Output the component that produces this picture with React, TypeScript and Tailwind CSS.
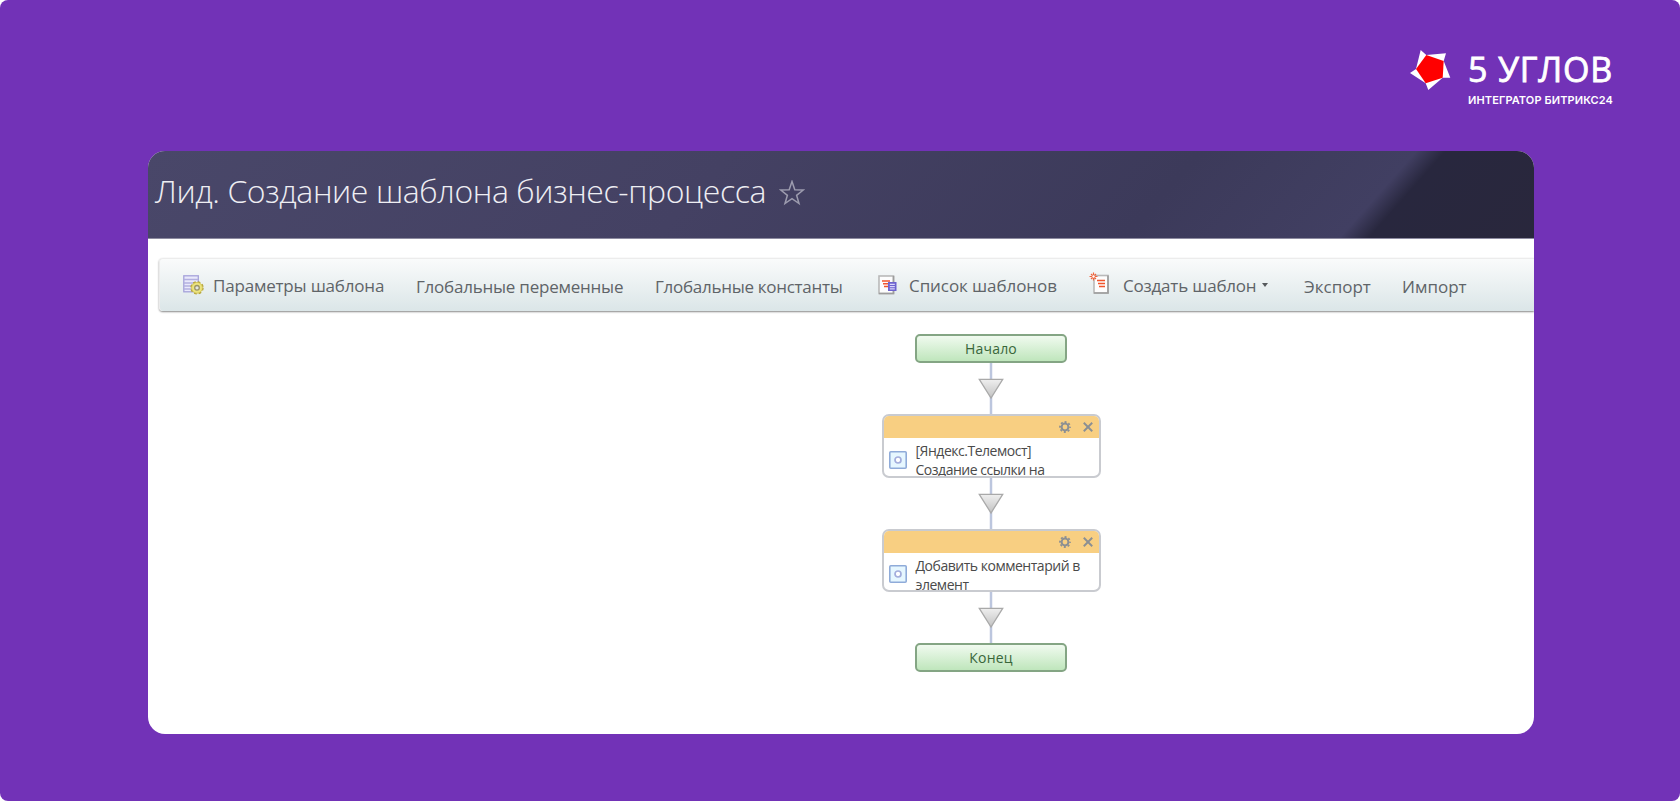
import React from 'react';

const sans = "font-['Open_Sans','Noto_Sans',sans-serif]";

function Logo() {
  return (
    <div className="flex gap-[14px]">
      <svg width="44" height="44" viewBox="0 0 44 44" className="shrink-0">
        <path d="M10.700 1 16.300 6 36 4.300 33.700 12 40.300 28.700 32.700 28.700 18.300 41 15.700 34.300 0 24 6 20Z" fill="#fff" />
        <path d="M16.300 6 33.700 12 32.700 28.700 15.700 34.300 6 20Z" fill="#f00" />
      </svg>
      <div className="text-white whitespace-nowrap">
        <div className={`${sans} text-[34px] leading-[40px] tracking-[0.8px] [-webkit-text-stroke:0.8px_white]`}>5 УГЛОВ</div>
        <div className="font-[Inter,sans-serif] mt-1 text-[11px] leading-[14px] font-semibold tracking-[0.1px]">ИНТЕГРАТОР БИТРИКС24</div>
      </div>
    </div>
  );
}

function SettingsIcon() {
  return (
    <svg width="22" height="20" viewBox="0 0 22 20">
      <rect x=".8" y=".8" width="14.500" height="16" fill="#e9e9fb" stroke="#a5a2da" strokeWidth="1.300" />
      <path d="M1 4.500h14M1 8h10M1 11h8M1 14h8" stroke="#b3b0e0" strokeWidth="1.300" />
      <circle cx="14" cy="12.800" r="5.700" fill="#e9df72" stroke="#b5a43c" strokeWidth="2" strokeDasharray="2.600 1.877" />
      <circle cx="14" cy="12.800" r="5.400" fill="#ece47e" stroke="#cdbf55" strokeWidth=".7" />
      <circle cx="14" cy="12.800" r="2.300" fill="#e3e6e2" stroke="#9a9468" strokeWidth="1.300" />
    </svg>
  );
}

function ListIcon() {
  return (
    <svg width="20" height="20" viewBox="0 0 20 20">
      <rect x="1" y="1" width="14.500" height="17.500" fill="#fdfdfd" stroke="#b9b9b9" strokeWidth="1.600" />
      <path d="M15.500 1v17.500H1" fill="none" stroke="#9d9d9d" strokeWidth="1.600" />
      <path d="M4 6h8M5 8.800h6M6 11.500h4" stroke="#f2552c" strokeWidth="1.600" />
      <rect x="10" y="7" width="8.500" height="9" fill="#6d63cf" />
      <path d="M11.800 9.300h5M11.800 11.600h5M11.800 13.900h5" stroke="#d9d6fb" strokeWidth="1.200" />
    </svg>
  );
}

function CreateIcon() {
  return (
    <svg width="21" height="23" viewBox="0 0 21 23">
      <rect x="5" y="3.500" width="14" height="17.500" fill="#fdfdfd" stroke="#b9b9b9" strokeWidth="1.600" />
      <path d="M19 3.500V21H5" fill="none" stroke="#9d9d9d" strokeWidth="1.600" />
      <path d="M8 8.500h8M9 11.500h7M10 14.500h6" stroke="#f2552c" strokeWidth="1.500" />
      <path d="M4.500.5v8M.5 4.500h8M2 2l5 5M7 2 2 7" stroke="#f0643c" strokeWidth="1.200" />
      <circle cx="4.500" cy="4.500" r="1.200" fill="#fff" />
    </svg>
  );
}

function Toolbar() {
  return (
    <div className="mt-[19px] ml-[11px] h-[53px] flex items-start rounded-l border-t border-l border-[#ececec] bg-linear-to-b from-[#fafbfb] to-[#dbe6e8] shadow-[0_1px_2px_#888] text-[17px] leading-6 text-[#5f6468] whitespace-nowrap pl-[23px]">
      <div className="w-[233px] flex pt-[15px] tracking-[-0.19px]">
        <span className="w-[30px] pt-px"><SettingsIcon /></span>
        <span>Параметры шаблона</span>
      </div>
      <div className="w-[239px] pt-4 tracking-[-0.23px]">Глобальные переменные</div>
      <div className="w-[223px] pt-4 tracking-[-0.28px]">Глобальные константы</div>
      <div className="w-[211px] flex pt-[15px] tracking-[-0.08px]">
        <span className="w-[31px] pt-px"><ListIcon /></span>
        <span>Список шаблонов</span>
      </div>
      <div className="w-[215px] flex pt-[15px] tracking-[-0.2px]">
        <span className="w-[34px] -mt-[2px]"><CreateIcon /></span>
        <span>Создать шаблон</span>
        <span className="mt-[9px] ml-[6px] h-0 border-x-[3.500px] border-t-4 border-x-transparent border-t-[#55595c]" />
      </div>
      <div className="w-[98px] pt-4">Экспорт</div>
      <div className="pt-4">Импорт</div>
    </div>
  );
}

function Terminal({ label }: { label: string }) {
  return (
    <div className="w-[152px] h-[29px] shrink-0 rounded-[5px] border-2 border-[#84a584] bg-linear-to-b from-[#f0faef] to-[#bfe6bc] text-center text-[14px] leading-[26px] tracking-[0.2px] text-[#39663a]">
      {label}
    </div>
  );
}

function Connector() {
  return (
    <svg width="26" height="51" viewBox="0 0 26 51" className="shrink-0">
      <defs>
        <linearGradient id="arrow" x1="0" y1="0" x2="0" y2="1">
          <stop offset="0" stopColor="#efefef" />
          <stop offset="1" stopColor="#c2c2c2" />
        </linearGradient>
      </defs>
      <path d="M13 0v51" stroke="#bcc6de" strokeWidth="2.500" />
      <path d="M1.300 16.300h23.400L13 35Z" fill="url(#arrow)" stroke="#a9a9a9" strokeWidth="1.300" />
    </svg>
  );
}

function Activity({ lines }: { lines: string[] }) {
  return (
    <div className="w-[219px] h-[63.500px] shrink-0 overflow-hidden rounded-[7px] border-2 border-[#c9cbd0] bg-white">
      <div className="h-[22px] flex items-center justify-end gap-[12px] bg-[#f8cf82] pr-[6px]">
        <svg width="12" height="12" viewBox="0 0 12 12">
          <circle cx="6" cy="6" r="5" fill="none" stroke="#8b8f93" strokeWidth="1.800" strokeDasharray="2 1.927" strokeDashoffset="1" />
          <circle cx="6" cy="6" r="3.400" fill="none" stroke="#8b8f93" strokeWidth="2" />
        </svg>
        <svg width="10" height="10" viewBox="0 0 9 9">
          <path d="m.7.7 7.600 7.600M8.300.7.700 8.300" stroke="#8b8f93" strokeWidth="1.700" />
        </svg>
      </div>
      <div className="flex pl-[5px]">
        <svg width="18" height="18" viewBox="0 0 18 18" className="mt-[12.500px] shrink-0">
          <rect x=".8" y=".8" width="16.400" height="16.400" rx="1" fill="#e6f7ff" stroke="#8fabd9" strokeWidth="1.600" />
          <circle cx="9" cy="9" r="3" fill="#fff" stroke="#a3addc" strokeWidth="1.700" />
        </svg>
        <div className="ml-[9px] mt-[3px] text-[14px] leading-[19px] tracking-[-0.48px] text-[#4a4a4a] whitespace-nowrap">
          {lines.map((line) => (
            <div key={line}>{line}</div>
          ))}
        </div>
      </div>
    </div>
  );
}

export default function App() {
  return (
    <div className="bg-white">
      <div className={`${sans} w-[1680px] h-[801px] overflow-hidden rounded-[8px] bg-[#7232b7]`}>
        <div className="h-[151px] flex justify-end pt-[49px] pr-[67px]">
          <Logo />
        </div>
        <div className="ml-[148px] w-[1386px] h-[583px] overflow-hidden rounded-[17px] bg-white">
          <div className="h-[88px] flex border-b border-[#8d8ba0] bg-[linear-gradient(131.500deg,#494769_0%,#444163_40%,#3c3a5a_72%,#413f62_86.700%,#28273e_88.700%,#29273c_100%)] pl-[7px]">
            <h1 className="mt-[17px] text-[32px] leading-[46px] font-light tracking-[-0.4px] text-[#eeeef3] whitespace-nowrap">Лид. Создание шаблона бизнес-процесса</h1>
            <svg width="26" height="26" viewBox="0 0 26 26" className="mt-[29px] ml-[13px]">
              <path d="M13 1.500 15.800 9.800 24.300 10 17.600 15.300 20 23.500 13 18.700 6 23.500 8.400 15.300 1.700 10 10.200 9.800Z" fill="none" stroke="#9c9bae" strokeWidth="1.500" />
            </svg>
          </div>
          <Toolbar />
          <div className="flex flex-col items-center pl-[300px] pt-[23px]">
            <Terminal label="Начало" />
            <Connector />
            <Activity lines={['[Яндекс.Телемост]', 'Создание ссылки на']} />
            <Connector />
            <Activity lines={['Добавить комментарий в', 'элемент']} />
            <Connector />
            <Terminal label="Конец" />
          </div>
        </div>
      </div>
    </div>
  );
}
